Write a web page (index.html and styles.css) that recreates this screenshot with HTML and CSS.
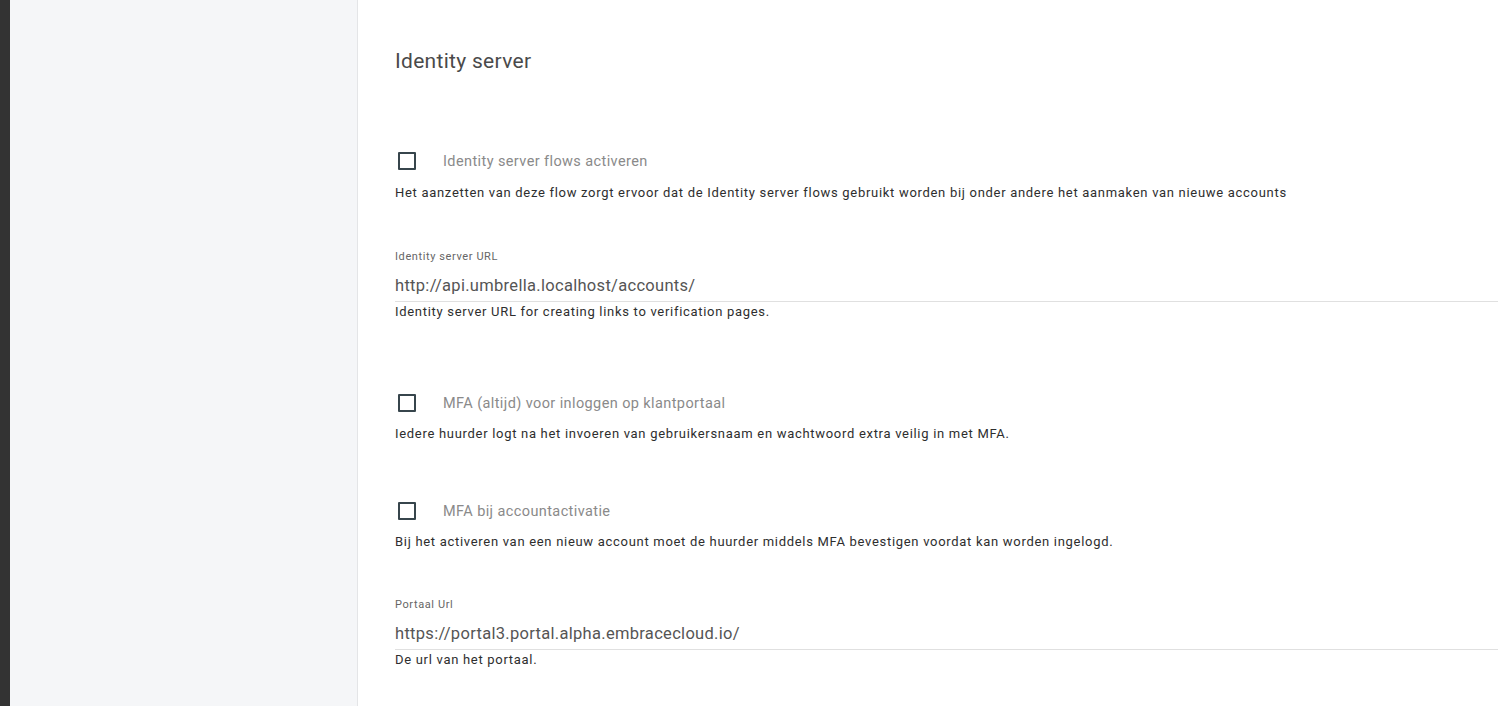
FILE: index.html
```html
<!DOCTYPE html>
<html lang="nl">
<head>
    <meta charset="UTF-8">
    <meta name="viewport" content="width=device-width, initial-scale=1.0">
    <title>Identity server</title>
    <link rel="stylesheet" href="styles.css">
</head>
<body>
    <div class="app">
        <div class="rail"></div>
        <aside class="sidebar"></aside>

        <main class="content">
            <h2 class="section-title">Identity server</h2>

            <div class="setting setting-first">
                <label class="check-row">
                    <input type="checkbox" class="check">
                    <span class="check-label">Identity server flows activeren</span>
                </label>
                <p class="setting-desc">Het aanzetten van deze flow zorgt ervoor dat de Identity server flows gebruikt worden bij onder andere het aanmaken van nieuwe accounts</p>
            </div>

            <div class="field field-server">
                <label class="field-label" for="idUrl">Identity server URL</label>
                <input type="text" id="idUrl" class="field-input" value="http://api.umbrella.localhost/accounts/">
                <p class="field-hint">Identity server URL for creating links to verification pages.</p>
            </div>

            <div class="setting setting-spaced">
                <label class="check-row">
                    <input type="checkbox" class="check">
                    <span class="check-label">MFA (altijd) voor inloggen op klantportaal</span>
                </label>
                <p class="setting-desc">Iedere huurder logt na het invoeren van gebruikersnaam en wachtwoord extra veilig in met MFA.</p>
            </div>

            <div class="setting">
                <label class="check-row">
                    <input type="checkbox" class="check">
                    <span class="check-label">MFA bij accountactivatie</span>
                </label>
                <p class="setting-desc">Bij het activeren van een nieuw account moet de huurder middels MFA bevestigen voordat kan worden ingelogd.</p>
            </div>

            <div class="field field-portal">
                <label class="field-label" for="portalUrl">Portaal Url</label>
                <input type="text" id="portalUrl" class="field-input" value="https://portal3.portal.alpha.embracecloud.io/">
                <p class="field-hint">De url van het portaal.</p>
            </div>
        </main>
    </div>
</body>
</html>
```

FILE: styles.css
```css
* {
    box-sizing: border-box;
    margin: 0;
    padding: 0;
}

html, body {
    height: 100%;
    overflow: hidden;
}

body {
    font-family: Roboto, "Liberation Sans", Arial, sans-serif;
    background-color: #fff;
    color: #333;
}

.app {
    display: flex;
    height: 100%;
}

.rail {
    width: 10px;
    flex-shrink: 0;
    background-color: #333;
}

.sidebar {
    width: 348px;
    flex-shrink: 0;
    background-color: #f5f6f8;
    border-right: 1px solid #e4e5e7;
}

.content {
    flex: 1;
    padding: 49px 0 0 37px;
    background: #fff;
}

.section-title {
    font-size: 21px;
    font-weight: 400;
    line-height: 24px;
    letter-spacing: 0.3px;
    color: #4a4a4a;
}

.setting {
    margin-top: 59px;
}

.setting-first {
    margin-top: 78px;
}

.setting-spaced {
    margin-top: 73px;
}

.check-row {
    display: flex;
    align-items: center;
    height: 20px;
}

.check {
    appearance: none;
    width: 18px;
    height: 18px;
    margin: 0 27px 0 3px;
    border: 2px solid #37454c;
    border-radius: 1px;
    background: #fff;
    cursor: pointer;
}

.check:checked {
    background: #37454c;
}

.check-label {
    font-size: 14.5px;
    letter-spacing: 0.4px;
    color: #8a8a8a;
}

.setting-desc {
    margin-top: 13px;
    font-size: 13px;
    line-height: 16px;
    letter-spacing: 0.7px;
    color: #2e2e2e;
}

.setting-first .setting-desc {
    margin-top: 14px;
}

.field-server {
    margin-top: 50px;
}

.field-portal {
    margin-top: 49px;
}

.field-label {
    display: block;
    font-size: 11px;
    line-height: 12px;
    letter-spacing: 0.6px;
    color: #666;
}

.field-input {
    display: block;
    width: 100%;
    margin-top: 13px;
    padding: 0 0 5px;
    font-family: inherit;
    font-size: 16.5px;
    line-height: 20px;
    letter-spacing: 0.3px;
    color: #555;
    border: none;
    border-bottom: 1px solid #e0e0e0;
    outline: none;
    background: transparent;
}

.field-input:focus {
    border-bottom-color: #37454c;
}

.field-hint {
    margin-top: 2px;
    font-size: 13px;
    line-height: 16px;
    letter-spacing: 0.7px;
    color: #2e2e2e;
}
```
